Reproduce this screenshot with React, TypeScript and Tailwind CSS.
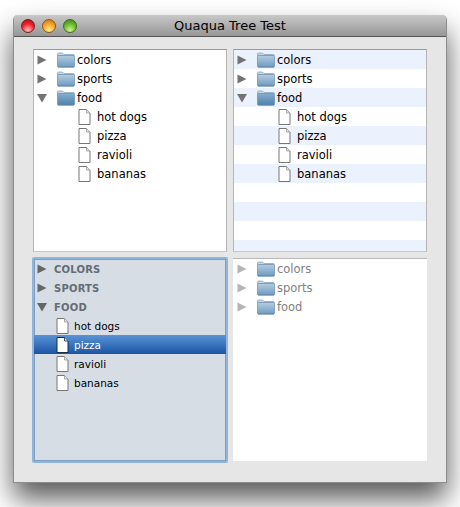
function Folder({ open }: { open?: boolean }) {
  return (
    <svg width="18" height="16" viewBox="0 0 18 16" className="shrink-0">
      <defs>
        <linearGradient id="fld" x1="0" y1="0" x2="0" y2="1">
          <stop offset="0" stopColor="#b4cde2" />
          <stop offset="1" stopColor="#6d9bc0" />
        </linearGradient>
        <linearGradient id="fldo" x1="0" y1="0" x2="0" y2="1">
          <stop offset="0" stopColor="#86aece" />
          <stop offset="1" stopColor="#4d81ad" />
        </linearGradient>
      </defs>
      <path d="M0.5 3.5V2a1 1 0 0 1 1-1h4l1.5 1.5h9.5a.5.5 0 0 1 .5.5v1z" fill="#c3d6e6" stroke="#8ba6bf" strokeWidth="0.8" />
      <rect x="0.5" y="3.5" width="17" height="11.5" rx="0.8" fill={open ? "url(#fldo)" : "url(#fld)"} stroke="#7396b4" strokeWidth="0.8" />
      <rect x="1" y="14.6" width="16" height="1" fill="#4a7396" opacity="0.6" />
    </svg>
  );
}

function Doc({ strong }: { strong?: boolean }) {
  return (
    <svg width="13" height="16" viewBox="0 0 13 16" className="shrink-0">
      <path
        d="M1 .5H8.5L12 4V15.5H1Z"
        fill="#fff"
        stroke={strong ? "#1c2b45" : "#777"}
        strokeWidth="1"
      />
      <path d="M8.5.5V4H12" fill="#e4e4e4" stroke={strong ? "#1c2b45" : "#999"} strokeWidth="0.8" />
    </svg>
  );
}

function Arrow({ open, color }: { open?: boolean; color: string }) {
  return (
    <svg width="11" height="10" viewBox="0 0 11 10" className="shrink-0">
      {open ? <path d="M0 1H10L5 9.5Z" fill={color} /> : <path d="M0.5 0.5L9.5 5L0.5 9.5Z" fill={color} />}
    </svg>
  );
}

const groups = ["colors", "sports", "food"];
const leaves = ["hot dogs", "pizza", "ravioli", "bananas"];

function PlainTree({ striped, disabled }: { striped?: boolean; disabled?: boolean }) {
  const rows = disabled
    ? groups.map((g) => ({ label: g, leaf: false }))
    : [...groups.map((g) => ({ label: g, leaf: false })), ...leaves.map((l) => ({ label: l, leaf: true }))];
  const stripes = striped ? Array.from({ length: 11 - rows.length }) : [];
  return (
    <div className="h-full overflow-hidden">
      {rows.map((r, i) => (
        <div
          key={r.label}
          className={`flex h-[19px] items-center ${striped && i % 2 === 0 ? "bg-[#ebf1fd]" : ""}`}
        >
          {r.leaf ? (
            <div className="flex items-center pl-[44px]">
              <Doc />
              <span className="mt-[2px] ml-[6px] text-black">{r.label}</span>
            </div>
          ) : (
            <div className="flex items-center pl-[3px]">
              <Arrow open={!disabled && r.label === "food"} color={disabled ? "#b5b5b5" : "#737373"} />
              <span className="ml-[9px]">
                <Folder open={!disabled && r.label === "food"} />
              </span>
              <span className={`mt-[2px] ml-[2px] ${disabled ? "text-[#808080]" : "text-black"}`}>{r.label}</span>
            </div>
          )}
        </div>
      ))}
      {stripes.map((_, i) => (
        <div key={i} className={`h-[19px] ${(rows.length + i) % 2 === 0 ? "bg-[#ebf1fd]" : ""}`} />
      ))}
    </div>
  );
}

function SideTree() {
  return (
    <div>
      {groups.map((g) => (
        <div key={g} className="flex h-[19px] items-center pl-[3px]">
          <Arrow open={g === "food"} color="#666" />
          <span className="mt-[2px] ml-[6px] text-[10px] font-bold tracking-[0.2px] text-[#646c74] uppercase">{g}</span>
        </div>
      ))}
      {leaves.map((l) => (
        <div
          key={l}
          className={`flex h-[19px] items-center pl-[22px] text-[10.5px] ${
            l === "pizza" ? "bg-linear-to-b from-[#5a94d6] to-[#1a55a5] text-white" : "text-black"
          }`}
        >
          <Doc strong={l === "pizza"} />
          <span className="mt-[2px] ml-[5px]">{l}</span>
        </div>
      ))}
    </div>
  );
}

export default function App() {
  return (
    <div className="h-[507px] w-[460px] overflow-hidden bg-white pt-[15px] pl-[13px] font-['DejaVu_Sans',sans-serif] text-[11.5px]">
      <div className="h-[468px] w-[434px] overflow-hidden rounded-t-[5px] border border-t-0 border-[#8c8c8c] bg-[#e6e6e6] shadow-[0_16px_28px_rgba(0,0,0,0.65)]">
        <div className="relative flex h-[22px] items-center justify-center border-b border-[#555] bg-linear-to-b from-[#c8c8c8] to-[#979797] text-[13px] text-black">
          <div className="absolute top-[4px] left-[7px] flex gap-[7px]">
            <span className="size-[14px] rounded-full border border-[#7a1e22] bg-[radial-gradient(circle_at_50%_85%,#ffc0c0,#f0202c_55%,#a01018)]" />
            <span className="size-[14px] rounded-full border border-[#8f5a14] bg-[radial-gradient(circle_at_50%_85%,#ffec90,#f8a428_55%,#c06c14)]" />
            <span className="size-[14px] rounded-full border border-[#3f6c1a] bg-[radial-gradient(circle_at_50%_85%,#ccf48c,#68b82c_55%,#3e7e18)]" />
          </div>
          Quaqua Tree Test
        </div>
        <div className="grid grid-cols-[194px_194px] grid-rows-[203px_203px] gap-x-[6px] gap-y-[6px] pt-[12px] pl-[19px]">
          <div className="border border-[#9a9a9a] border-b-[#c8c8c8] border-x-[#b5b5b5] bg-white">
            <PlainTree />
          </div>
          <div className="border border-[#9a9a9a] border-b-[#c8c8c8] border-x-[#b5b5b5] bg-white">
            <PlainTree striped />
          </div>
          <div className="-mx-px -mt-px h-[206px] rounded-[2px] border-2 border-[#8fb5dc] bg-[#d6dde5] shadow-[inset_0_0_0_1px_#7f9fc2]">
            <SideTree />
          </div>
          <div className="border-t border-[#b8b8b8] bg-white pl-px">
            <PlainTree disabled />
          </div>
        </div>
      </div>
    </div>
  );
}
